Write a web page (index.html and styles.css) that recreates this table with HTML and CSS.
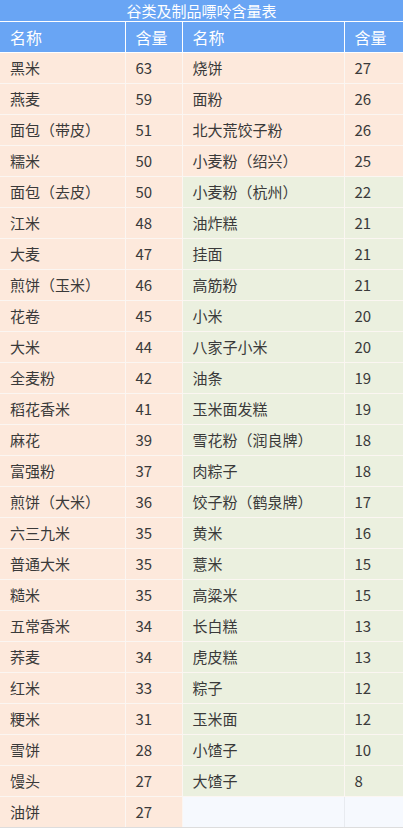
FILE: index.html
```html
<!DOCTYPE html>
<html lang="zh">
<head>
<meta charset="utf-8">
<link rel="stylesheet" href="styles.css">
</head>
<body>
<table class="tbl">
  <colgroup><col class="c1"><col class="c2"><col class="c3"><col class="c4"></colgroup>
  <thead>
    <tr class="title"><th colspan="4">谷类及制品嘌呤含量表</th></tr>
    <tr class="head"><th>名称</th><th>含量</th><th>名称</th><th>含量</th></tr>
  </thead>
  <tbody>
    <tr><td class="p">黑米</td><td class="p">63</td><td class="p">烧饼</td><td class="p">27</td></tr>
    <tr><td class="p">燕麦</td><td class="p">59</td><td class="p">面粉</td><td class="p">26</td></tr>
    <tr><td class="p">面包（带皮）</td><td class="p">51</td><td class="p">北大荒饺子粉</td><td class="p">26</td></tr>
    <tr><td class="p">糯米</td><td class="p">50</td><td class="p">小麦粉（绍兴）</td><td class="p">25</td></tr>
    <tr><td class="p">面包（去皮）</td><td class="p">50</td><td class="g">小麦粉（杭州）</td><td class="g">22</td></tr>
    <tr><td class="p">江米</td><td class="p">48</td><td class="g">油炸糕</td><td class="g">21</td></tr>
    <tr><td class="p">大麦</td><td class="p">47</td><td class="g">挂面</td><td class="g">21</td></tr>
    <tr><td class="p">煎饼（玉米）</td><td class="p">46</td><td class="g">高筋粉</td><td class="g">21</td></tr>
    <tr><td class="p">花卷</td><td class="p">45</td><td class="g">小米</td><td class="g">20</td></tr>
    <tr><td class="p">大米</td><td class="p">44</td><td class="g">八家子小米</td><td class="g">20</td></tr>
    <tr><td class="p">全麦粉</td><td class="p">42</td><td class="g">油条</td><td class="g">19</td></tr>
    <tr><td class="p">稻花香米</td><td class="p">41</td><td class="g">玉米面发糕</td><td class="g">19</td></tr>
    <tr><td class="p">麻花</td><td class="p">39</td><td class="g">雪花粉（润良牌）</td><td class="g">18</td></tr>
    <tr><td class="p">富强粉</td><td class="p">37</td><td class="g">肉粽子</td><td class="g">18</td></tr>
    <tr><td class="p">煎饼（大米）</td><td class="p">36</td><td class="g">饺子粉（鹤泉牌）</td><td class="g">17</td></tr>
    <tr><td class="p">六三九米</td><td class="p">35</td><td class="g">黄米</td><td class="g">16</td></tr>
    <tr><td class="p">普通大米</td><td class="p">35</td><td class="g">薏米</td><td class="g">15</td></tr>
    <tr><td class="p">糙米</td><td class="p">35</td><td class="g">高粱米</td><td class="g">15</td></tr>
    <tr><td class="p">五常香米</td><td class="p">34</td><td class="g">长白糕</td><td class="g">13</td></tr>
    <tr><td class="p">荞麦</td><td class="p">34</td><td class="g">虎皮糕</td><td class="g">13</td></tr>
    <tr><td class="p">红米</td><td class="p">33</td><td class="g">粽子</td><td class="g">12</td></tr>
    <tr><td class="p">粳米</td><td class="p">31</td><td class="g">玉米面</td><td class="g">12</td></tr>
    <tr><td class="p">雪饼</td><td class="p">28</td><td class="g">小馇子</td><td class="g">10</td></tr>
    <tr><td class="p">馒头</td><td class="p">27</td><td class="g">大馇子</td><td class="g">8</td></tr>
    <tr><td class="p">油饼</td><td class="p">27</td><td class="e"></td><td class="e"></td></tr>
  </tbody>
</table>
</body>
</html>
```

FILE: styles.css
```css
html, body {
  margin: 0;
  padding: 0;
  background: #ffffff;
}
body {
  font-family: "Noto Sans CJK SC", "Noto Sans", sans-serif;
}
.tbl {
  width: 403px;
  border-collapse: collapse;
  table-layout: fixed;
}
.c1 { width: 125px; }
.c2 { width: 57px; }
.c3 { width: 162px; }
.c4 { width: 59px; }

.title th {
  background: #69a5f4;
  color: #ffffff;
  font-size: 15px;
  font-weight: normal;
  height: 21px;
  padding: 0;
  line-height: 20px;
  text-align: center;
  border: 0;
  border-bottom: 1px solid #ffffff;
}
.head th {
  background: #69a5f4;
  color: #ffffff;
  font-size: 16px;
  font-weight: normal;
  text-align: left;
  padding: 0 0 0 10px;
  height: 30px;
  border: 1px solid #ffffff;
  border-top: 0;
}
td {
  font-size: 15px;
  color: #3a3a3a;
  padding: 0 0 0 10px;
  height: 30px;
  border: 1px solid #fbf6f2;
  line-height: 20px;
}
tbody tr:last-child td {
  border-bottom: 1px solid #dddddd;
}
td.p { background: #fde9dc; }
td.g { background: #ebf0df; }
td.e { background: #f6f9fe; border-color: #e8ebf0; }
tr td:first-child, tr th:first-child { border-left: 0; }
tr td:last-child, tr th:last-child { border-right: 0; }
```
